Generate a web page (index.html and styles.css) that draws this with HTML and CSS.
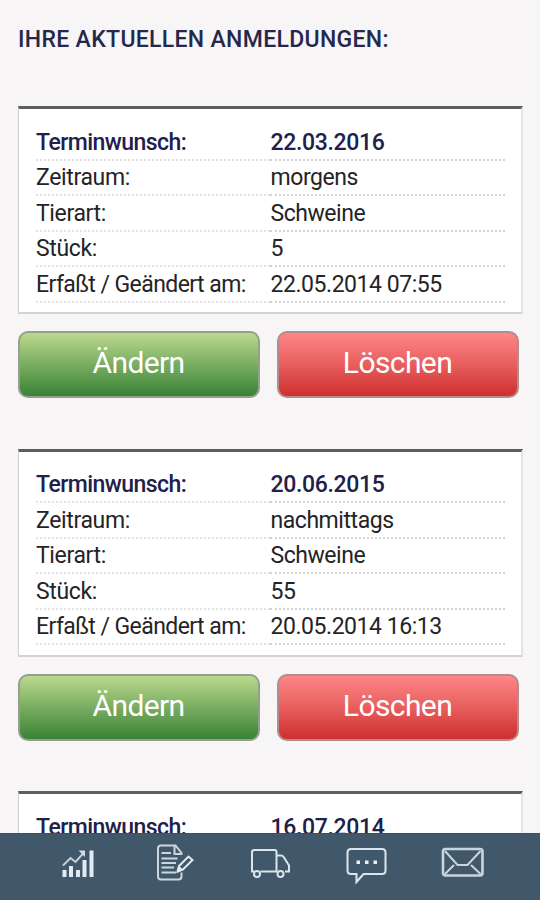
FILE: index.html
```html
<!DOCTYPE html>
<html lang="de">
<head>
<meta charset="utf-8">
<title>Anmeldungen</title>
<link rel="stylesheet" href="styles.css">
</head>
<body>
<main class="content">
  <h1 class="title">IHRE AKTUELLEN ANMELDUNGEN:</h1>
  <section class="entry">
    <dl class="card">
      <div class="row row-head"><dt>Terminwunsch:</dt><dd>22.03.2016</dd></div>
      <div class="row"><dt>Zeitraum:</dt><dd>morgens</dd></div>
      <div class="row"><dt>Tierart:</dt><dd>Schweine</dd></div>
      <div class="row"><dt>Stück:</dt><dd>5</dd></div>
      <div class="row row-stamp"><dt>Erfaßt / Geändert am:</dt><dd>22.05.2014 07:55</dd></div>
    </dl>
    <div class="actions"><button class="btn btn-edit">Ändern</button><button class="btn btn-delete">Löschen</button></div>
  </section>
  <section class="entry">
    <dl class="card">
      <div class="row row-head"><dt>Terminwunsch:</dt><dd>20.06.2015</dd></div>
      <div class="row"><dt>Zeitraum:</dt><dd>nachmittags</dd></div>
      <div class="row"><dt>Tierart:</dt><dd>Schweine</dd></div>
      <div class="row"><dt>Stück:</dt><dd>55</dd></div>
      <div class="row row-stamp"><dt>Erfaßt / Geändert am:</dt><dd>20.05.2014 16:13</dd></div>
    </dl>
    <div class="actions"><button class="btn btn-edit">Ändern</button><button class="btn btn-delete">Löschen</button></div>
  </section>
  <section class="entry">
    <dl class="card">
      <div class="row row-head"><dt>Terminwunsch:</dt><dd>16.07.2014</dd></div>
    </dl>
  </section>
</main>
<nav class="tabs">
  <a class="tab"><svg width="44" height="44" viewBox="0 0 44 44"><g fill="#e3ebf2"><path d="M6.500 29h4v7h-4zM13 25h4v11h-4zM20 29h4v7h-4zM26.500 19h4v17h-4zM33.500 9.500h4V36h-4z"/></g><path d="M7 24.500l7.500-7.500 5 4 8-9" stroke="#c3d0da" stroke-width="2"/><path d="M22.500 9.500H29V16z" fill="#d3dde5"/></svg></a>
  <a class="tab"><svg width="44" height="44" viewBox="0 0 44 44"><path d="M29.500 14v-2l-6-7.500H9q-3 0-3 3v28q0 3 3 3h17.500q3 0 3-3v-4M22.500 5v8h7M9.500 12H19M9.500 17.500H25.500M9.500 22H24M9.500 26.500H22M9.500 31.500H24" stroke="#cbd7df" stroke-width="2"/><path d="M25.500 30.500l1.500-5.500L36.500 15.500l4 3.500-9.500 9.500z" fill="#41586b" stroke="#e3ebf2" stroke-width="2"/><path d="M25 32l6.500-3-5-4.500z" fill="#e3ebf2"/></svg></a>
  <a class="tab"><svg width="44" height="44" viewBox="0 0 44 44"><path d="M6 30.500H4V11q0-2 2.500-2h20q2 0 2 2V30.500H12.500M28.500 14.500h4.500q2 0 3 2l5 8v6h-4M28.500 30.500h1" stroke="#dae6ec" stroke-width="2"/><circle cx="9" cy="33" r="3" stroke="#dae6ec" stroke-width="2"/><circle cx="32.500" cy="33" r="3" stroke="#dae6ec" stroke-width="2"/></svg></a>
  <a class="tab"><svg width="44" height="44" viewBox="0 0 44 44"><path d="M7 8h31q3.500 0 3.500 3.500v18q0 3.500-3.500 3.500H19.500L12.500 41V33H7Q3.500 33 3.500 29.500V11.500q0-3.500 3.500-3.500z" stroke="#dae6ec" stroke-width="2"/><path d="M12.500 19.500H16V23h-3.500zM21 19.500h3.500V23H21zM29.500 19.500H33V23h-3.500z" fill="#e8f0f4"/></svg></a>
  <a class="tab"><svg width="44" height="44" viewBox="0 0 44 44"><rect x="3" y="8" width="39.500" height="26.500" rx="2.500" stroke="#c9d5dd" stroke-width="2.600"/><path d="M5 10l12.500 14H27.500L40.500 10M5 33l9-9M40.500 33L31 24" stroke="#c9d5dd" stroke-width="2"/></svg></a>
</nav>
</body>
</html>
```
FILE: styles.css
```css
* { box-sizing: border-box; }
body {
  margin: 0;
  width: 540px;
  height: 900px;
  overflow: hidden;
  display: flex;
  flex-direction: column;
  background: #f7f5f6;
  color: #242426;
  font-family: Roboto, "Liberation Sans", sans-serif;
}
.content { height: 833px; overflow: hidden; padding: 0 17px 0 18px; }
.title {
  margin: 0;
  height: 106px;
  padding-top: 26px;
  font-size: 23px;
  line-height: 28px;
  font-weight: 500;
  letter-spacing: 0.320px;
  color: #25284a;
  white-space: nowrap;
}
.entry { height: 342.500px; }
.card {
  margin: 0;
  height: 208px;
  padding: 15.500px 16px 0 17px;
  background: #fff;
  border: 1px solid #ceced1;
  border-top: 3px solid #5e5d60;
  border-right: 2px solid #e4e3e5;
  border-bottom: 2px solid #d3d2d5;
}
.row {
  display: grid;
  grid-template-columns: 234px 1fr;
  height: 35.500px;
  font-size: 23px;
  line-height: 35px;
  letter-spacing: -0.350px;
  white-space: nowrap;
}
.row dt, .row dd { margin: 0; height: 36px; border-bottom: 2px dotted #e2e2e4; }
.row dd { border-bottom-color: #d2d2d4; letter-spacing: -0.450px; text-indent: 0.500px; }
.row-head { font-weight: 500; color: #202049; letter-spacing: -0.550px; }
.row-head dd { letter-spacing: -0.350px; }
.row-stamp { letter-spacing: -0.570px; }
.actions { display: flex; gap: 17px; margin-top: 17px; }
.btn {
  width: 242px;
  height: 67px;
  padding: 0 1px 3px 0;
  border: 2px solid #93a08d;
  border-radius: 10px;
  color: #fff;
  font: 400 30px/40px Roboto, "Liberation Sans", sans-serif;
  letter-spacing: -0.600px;
}
.btn-edit { background: linear-gradient(#c1dc91, #78ad61 50%, #358033) border-box; }
.btn-delete { background: linear-gradient(#ff8989, #e85e5e 50%, #cd2c2c) border-box; border-color: #b58c8d; }
.tabs {
  height: 67px;
  padding: 7px 30px 0;
  display: flex;
  justify-content: space-between;
  background: #41586b;
  border-top: 1px solid #385066;
}
.tab { display: flex; width: 96px; justify-content: center; }
.tab svg { fill: none; }
```
